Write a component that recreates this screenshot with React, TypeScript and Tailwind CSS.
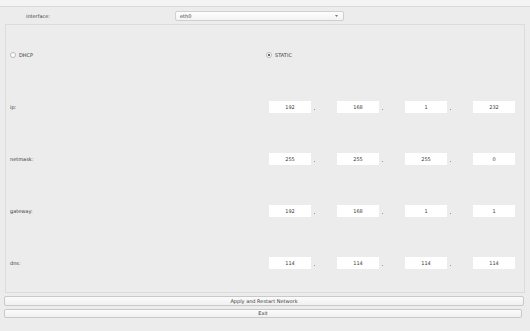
const rows = [
  { label: 'ip:', values: ['192', '168', '1', '232'] },
  { label: 'netmask:', values: ['255', '255', '255', '0'] },
  { label: 'gateway:', values: ['192', '168', '1', '1'] },
  { label: 'dns:', values: ['114', '114', '114', '114'] },
]

function Radio({ label, checked }: { label: string; checked?: boolean }) {
  return (
    <div className="flex items-center gap-[3px]">
      <span className="flex h-[6px] w-[6px] items-center justify-center rounded-full border border-[#b9b9b9] bg-white">
        {checked && <span className="h-[2px] w-[2px] rounded-full bg-[#333]" />}
      </span>
      <span>{label}</span>
    </div>
  )
}

function IpField({ value }: { value: string }) {
  return (
    <div className="flex h-[12px] w-[42px] items-center justify-center bg-white">{value}</div>
  )
}

function Button({ children, className }: { children: string; className: string }) {
  return (
    <div
      className={`flex items-center justify-center rounded-[2px] border border-[#c9c9c9] bg-gradient-to-b from-[#fbfbfb] to-[#f0f0f0] ${className}`}
    >
      {children}
    </div>
  )
}

export default function App() {
  return (
    <div
      className="flex h-[331px] w-[530px] flex-col bg-[#ececec] text-[5px] leading-none text-[#3a3a3a]"
      style={{ fontFamily: '"DejaVu Sans", sans-serif' }}
    >
      <div className="h-[7px] border-b border-[#dadada] bg-[#f3f3f3]" />

      <div className="mt-[4px] flex h-[10px] items-center">
        <span className="ml-[26px] w-[149px]">interface:</span>
        <div className="flex h-[10px] w-[169px] items-center justify-between rounded-[2px] border border-[#cfcfcf] bg-gradient-to-b from-[#fdfdfd] to-[#f3f3f3] pl-[4px] pr-[5px]">
          <span>eth0</span>
          <svg width="3" height="2" viewBox="0 0 3 2">
            <path d="M0 0h3L1.5 2z" fill="#777" />
          </svg>
        </div>
      </div>

      <div className="ml-[5px] mt-[3px] flex h-[269px] w-[520px] flex-col border border-[#dcdcdc] pl-[4px] pt-[4px]">
        <div className="flex h-[52px] items-center">
          <div className="w-[256px]">
            <Radio label="DHCP" />
          </div>
          <Radio label="STATIC" checked />
        </div>
        {rows.map((r) => (
          <div key={r.label} className="flex h-[52px] items-center">
            <span className="w-[259px]">{r.label}</span>
            <div className="flex items-center">
              {r.values.map((v, i) => (
                <div key={i} className="flex items-center">
                  <IpField value={v} />
                  {i < 3 && (
                    <span className="flex h-[12px] w-[26px] items-end pb-[3px] pl-[3px]">
                      <span className="h-[1px] w-[1px] bg-[#9a9a9a]" />
                    </span>
                  )}
                </div>
              ))}
            </div>
          </div>
        ))}
      </div>

      <Button className="ml-[4px] mt-[3px] h-[10px] w-[520px]">Apply and Restart Network</Button>
      <Button className="ml-[4px] mt-[3px] h-[9px] w-[518px]">Exit</Button>
    </div>
  )
}
